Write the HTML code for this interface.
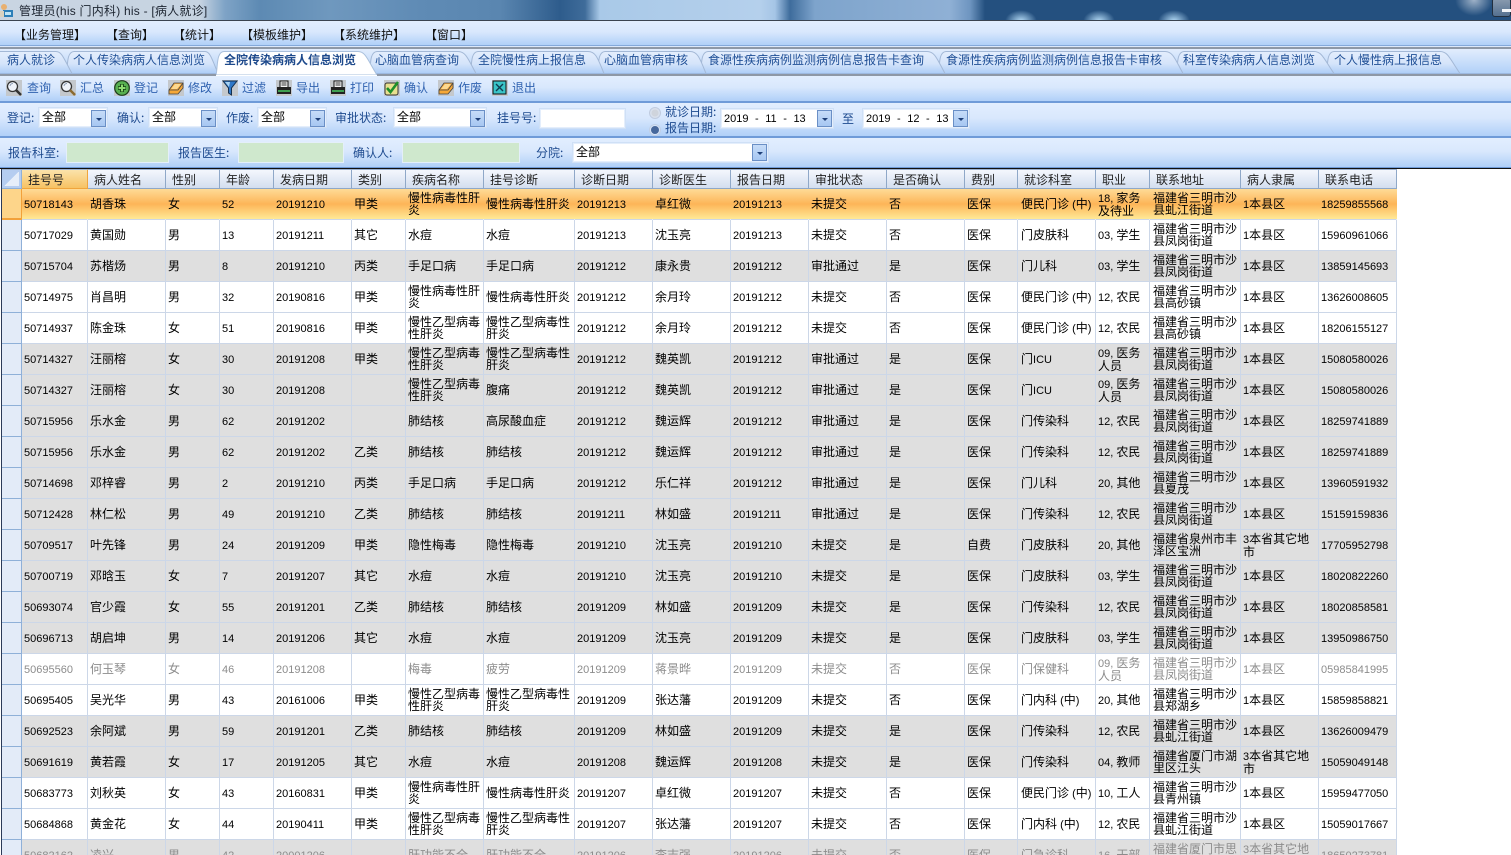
<!DOCTYPE html>
<html lang="zh"><head><meta charset="utf-8"><title>病人就诊</title>
<style>
html,body{margin:0;padding:0;background:#fff}
#p{position:relative;width:1511px;height:855px;overflow:hidden;background:#fff;font:12px/12px "WenQuanYi Zen Hei","Noto Sans CJK SC",sans-serif;color:#000}
#p i{font:normal 11px/12px "Liberation Sans",sans-serif}
#p i.dt{word-spacing:3.500px}
.a{position:absolute;white-space:nowrap}
.bar{position:absolute;left:0;width:1511px;background:linear-gradient(#e2eefe,#d9e8fd 45%,#b0d0f8)}
.l{color:#1d4a8f}
.t{color:#1f4f96}
.b{color:#2f62b0}
.box{position:absolute;background:#fff;border:1px solid #cfe0f6;box-sizing:border-box;padding:3px 0 0 3px;box-shadow:inset 0 0 0 1px #e4eefc}
.btn{position:absolute;width:15px;height:17px;box-sizing:border-box;background:linear-gradient(#c6dcf8,#a7c7f2);border:1px solid #6a8fc6}
.btn:after{content:"";position:absolute;left:4px;top:7px;border:3px solid transparent;border-top:3px solid #1e3f78;border-bottom:0}
.g{position:absolute;background:#cfe8cd;border:1px solid #e4effa;box-sizing:border-box}
.ic{position:absolute;width:16px;height:16px;top:80px;background:#c4c8cc}
table{position:absolute;left:2px;top:169px;border-collapse:separate;border-spacing:0;table-layout:fixed;width:1395px}
th{height:20px;box-sizing:border-box;padding:1px 0 0 6px;font-weight:normal;text-align:left;color:#222;background:linear-gradient(#f4f7fd,#d3deef);border-right:1px solid #8fa8c8;border-bottom:1px solid #8fa8c8;border-top:1px solid #9ab0cf;overflow:hidden}
td{height:31px;box-sizing:border-box;padding:0 0 0 2px;vertical-align:middle;border-right:1px solid #ccd7e8;border-bottom:1px solid #ccd7e8;overflow:hidden;background:#fff}
td:nth-child(16),td:nth-child(18){padding-left:3px}
tr th:first-child{padding:0;background:#b5cdf0 linear-gradient(135deg,#b5cdf0 50%,#e6eef9 50%);box-shadow:inset 0 0 0 2px #b5cdf0;border-right:1px solid #8fb0d8;border-bottom:1px solid #8fb0d8}
tr.y td{background:#dfdfdf}
tr.m td{color:#8c8c8c}
tr.s td{background:linear-gradient(#fedb97,#fdb558 50%,#ffe996);border-bottom-color:#ccd7e8;border-right-color:transparent}
table tr td:first-child{padding:0;background:#e3ebf8;border-right:1px solid #8fb0d8;border-bottom:1px solid #8fb0d8}
table tr.s td:first-child{background:#fdd58a;border-right:1px solid #f2a13a;border-bottom:1px solid #f2a13a;box-shadow:inset 0 -1px 0 #f2a13a}
th.o{background:linear-gradient(#fbe3ab,#f7c263);border-right:1px solid #f0a53c;border-bottom:1px solid #f0a53c}
</style></head><body><div id="p">

<!-- title bar -->
<div class="a" style="left:0;top:0;width:1511px;height:21px;background:linear-gradient(90deg,#c9d5e2 0,#c6d3e1 200px,#7ea3c6 225px,#5d8ab3 260px,#6f98be 330px,#5f8bb5 420px,#5a86b0 500px,#2e5c8c 560px,#3f6c9a 585px,#a9c9e8 600px,#b5d0ec 760px,#a5c5e6 775px,#3e6c9c 790px,#7ea4cc 815px,#8fb0d5 950px,#6e95c0 970px,#24507f 985px,#24507f 1511px)"></div>
<div class="a" style="left:1005px;top:10px;width:32px;height:11px;background:radial-gradient(ellipse at 50% 100%,#b4dbf6,rgba(36,80,127,0) 70%)"></div>
<div class="a" style="left:1083px;top:10px;width:32px;height:11px;background:radial-gradient(ellipse at 50% 100%,#b4dbf6,rgba(36,80,127,0) 70%)"></div>
<div class="a" style="left:1158px;top:10px;width:32px;height:11px;background:radial-gradient(ellipse at 50% 100%,#b4dbf6,rgba(36,80,127,0) 70%)"></div>
<div class="a" style="left:1455px;top:0;width:38px;height:16px;background:radial-gradient(ellipse at 50% 0,#9fb2c8,rgba(36,80,127,0) 70%)"></div>
<div class="a" style="left:1492px;top:-2px;width:19px;height:19px;box-sizing:border-box;border:1px solid #222f3e;border-radius:3px;background:linear-gradient(#8a9bb0,#54708f)"></div>
<div class="a" style="left:1502px;top:9px;width:9px;height:3px;background:#f0f4f8"></div>
<svg class="a" style="left:0;top:4px" width="14" height="14" viewBox="0 0 14 14"><rect x="3" y="6" width="10" height="7" fill="#2c7fb8"/><rect x="5" y="8" width="6" height="3" fill="#bfe4f5"/><circle cx="4" cy="3" r="3" fill="#e8b070"/><rect x="0" y="7" width="4" height="6" fill="#d9d2c0"/></svg>
<div class="a" style="left:19px;top:4px;color:#1c2430;letter-spacing:.23px;font:12px/14px 'Liberation Sans','WenQuanYi Zen Hei',sans-serif">管理员(his 门内科) his - [病人就诊]</div>
<div class="a" style="left:0;top:20px;width:1511px;height:1px;background:#3b4450"></div>

<!-- menu -->
<div class="bar" style="top:21px;height:24px"></div>
<div class="a" style="left:0;top:45px;width:1511px;height:1px;background:#84a9da"></div>
<div class="a" style="left:0;top:46px;width:1511px;height:1px;background:#dbe8fb"></div>
<div class="a" style="left:0;top:47px;width:1511px;height:2px;background:#8e98a6"></div>
<div class="a" style="left:14px;top:29px;color:#111">【业务管理】</div>
<div class="a" style="left:106px;top:29px;color:#111">【查询】</div>
<div class="a" style="left:173px;top:29px;color:#111">【统计】</div>
<div class="a" style="left:241px;top:29px;color:#111">【模板维护】</div>
<div class="a" style="left:333px;top:29px;color:#111">【系统维护】</div>
<div class="a" style="left:425px;top:29px;color:#111">【窗口】</div>

<!-- tabs -->
<div class="a" style="left:0;top:49px;width:1511px;height:25px;background:linear-gradient(#e2edfd,#b0d0f8)"></div>
<svg class="a" style="left:0;top:49px" width="1511" height="26" viewBox="0 0 1511 26">
<defs><linearGradient id="tb" x1="0" y1="0" x2="0" y2="1"><stop offset="0" stop-color="#e4eefd"/><stop offset=".55" stop-color="#d5e4fa"/><stop offset="1" stop-color="#adcdf7"/></linearGradient></defs>
<g fill="url(#tb)" stroke="#a3b8d6" stroke-width="1">
<path d="M1326.5 24.500C1328 18 1326 3 1334 2.500H1440C1448 2.500 1450 10 1460 24.500Z"/>
<path d="M1176.500 24.500C1178 18 1176 3 1184 2.500H1314C1322 2.500 1324 10 1334 24.500Z"/>
<path d="M938.500 24.500C940 18 938 3 946 2.500H1165C1173 2.500 1175 10 1183 24.500Z"/>
<path d="M700.500 24.500C702 18 700 3 708 2.500H927C935 2.500 937 10 945 24.500Z"/>
<path d="M597.500 24.500C599 18 597 3 605 2.500H690C698 2.500 700 10 706 24.500Z"/>
<path d="M470.500 24.500C472 18 470 3 478 2.500H588C596 2.500 598 10 604 24.500Z"/>
<path d="M369.500 24.500C371 18 369 3 377 2.500H458C466 2.500 468 10 476 24.500Z"/>
<path d="M66.500 24.500C68 18 66 3 74 2.500H205C210 2.500 212 10 218 24.500Z"/>
<path d="M-3 24.500V2.500H56C62 2.500 64 10 72 24.500Z"/>
</g>
<path d="M0 24.500H1511" stroke="#9db9e0" fill="none"/>
<path d="M216 26C218 18 216 3 224 2.500H358C366 2.500 368 12 377 26Z" fill="#fff" stroke="#aac0dc"/>
</svg>
<div class="a" style="left:0;top:74px;width:216px;height:2px;background:#8e98a6"></div>
<div class="a" style="left:377px;top:74px;width:1134px;height:2px;background:#8e98a6"></div>
<div class="a t" style="left:7px;top:54px">病人就诊</div>
<div class="a t" style="left:73px;top:54px">个人传染病病人信息浏览</div>
<div class="a" style="left:224px;top:54px;font-weight:bold;color:#1e4a8c">全院传染病病人信息浏览</div>
<div class="a t" style="left:375px;top:54px">心脑血管病查询</div>
<div class="a t" style="left:478px;top:54px">全院慢性病上报信息</div>
<div class="a t" style="left:604px;top:54px">心脑血管病审核</div>
<div class="a t" style="left:708px;top:54px">食源性疾病病例监测病例信息报告卡查询</div>
<div class="a t" style="left:946px;top:54px">食源性疾病病例监测病例信息报告卡审核</div>
<div class="a t" style="left:1183px;top:54px">科室传染病病人信息浏览</div>
<div class="a t" style="left:1334px;top:54px">个人慢性病上报信息</div>

<!-- toolbar -->
<div class="bar" style="top:76px;height:25px"></div>
<div class="a" style="left:0;top:101px;width:1511px;height:2px;background:#6f9bd8"></div>

<svg class="ic" style="left:6px" viewBox="0 0 16 16"><circle cx="6.500" cy="6.500" r="5" fill="#eef2f8" stroke="#333" stroke-width="1.300"/><path d="M10 10l5 5" stroke="#333" stroke-width="2.500"/><path d="M4 6a3 3 0 0 1 3-2.500" stroke="#8a9ab0" fill="none"/></svg>
<svg class="ic" style="left:60px" viewBox="0 0 16 16"><circle cx="6.500" cy="6.500" r="5" fill="#eef2f8" stroke="#333" stroke-width="1.300"/><path d="M10 10l5 5" stroke="#8a6a30" stroke-width="2.500"/><path d="M4 6a3 3 0 0 1 3-2.500" stroke="#8a9ab0" fill="none"/></svg>
<svg class="ic" style="left:114px" viewBox="0 0 16 16"><circle cx="8" cy="8" r="7.300" fill="#58b050" stroke="#1c3a1c" stroke-width="1.200"/><path d="M8 4v8M4 8h8" stroke="#0f3a10" stroke-width="3.600"/><path d="M8 4.500v7M4.500 8h7" stroke="#8edc70" stroke-width="2"/></svg>
<svg class="ic" style="left:168px" viewBox="0 0 16 16"><path d="M1 10L6 3h9v5l-5 6H1z" fill="#f6a838" stroke="#444" stroke-width=".8"/><path d="M1 10h9l5-7" fill="none" stroke="#444" stroke-width=".8"/><path d="M3 9l4-5h6l-4 5z" fill="#fdd88e"/></svg>
<svg class="ic" style="left:222px" viewBox="0 0 16 16"><path d="M1 1h14L9.500 8v7l-3-2V8z" fill="#2f78c8" stroke="#15304f"/><path d="M3 2h5L7 7z" fill="#a8d4f4"/></svg>
<svg class="ic" style="left:276px" viewBox="0 0 16 16"><rect x="4" y="1" width="8" height="7" fill="#f4f4f4" stroke="#111"/><path d="M5.500 3h5M5.500 5h5" stroke="#333"/><rect x="1" y="7" width="14" height="7" fill="#222"/><rect x="2" y="10" width="12" height="2" fill="#3f9f50"/></svg>
<svg class="ic" style="left:330px" viewBox="0 0 16 16"><rect x="4" y="1" width="8" height="7" fill="#f4f4f4" stroke="#111"/><path d="M5.500 3h5M5.500 5h5" stroke="#333"/><rect x="1" y="7" width="14" height="7" fill="#222"/><rect x="2" y="10" width="12" height="2" fill="#3f9f50"/></svg>
<svg class="ic" style="left:384px" viewBox="0 0 16 16"><rect x="1" y="3" width="13" height="12" rx="2" fill="#e8e090" stroke="#333"/><path d="M3 8l3.500 4L14 2" fill="none" stroke="#1f8f2a" stroke-width="2.600"/></svg>
<svg class="ic" style="left:438px" viewBox="0 0 16 16"><path d="M1 10L6 3h9v5l-5 6H1z" fill="#f6a838" stroke="#444" stroke-width=".8"/><path d="M1 10h9l5-7" fill="none" stroke="#444" stroke-width=".8"/><path d="M3 9l4-5h6l-4 5z" fill="#fdd88e"/></svg>
<svg class="ic" style="left:492px" viewBox="0 0 16 16"><rect x="1" y="1" width="13" height="13" fill="#3ac4c8" stroke="#111"/><path d="M4 4l7 7M11 4l-7 7" stroke="#103c50" stroke-width="1.400"/></svg>

<div class="a b" style="left:27px;top:82px">查询</div>
<div class="a b" style="left:80px;top:82px">汇总</div>
<div class="a b" style="left:134px;top:82px">登记</div>
<div class="a b" style="left:188px;top:82px">修改</div>
<div class="a b" style="left:242px;top:82px">过滤</div>
<div class="a b" style="left:296px;top:82px">导出</div>
<div class="a b" style="left:350px;top:82px">打印</div>
<div class="a b" style="left:404px;top:82px">确认</div>
<div class="a b" style="left:458px;top:82px">作废</div>
<div class="a b" style="left:512px;top:82px">退出</div>

<!-- filter row 1 -->
<div class="bar" style="top:103px;height:33px"></div>
<div class="a" style="left:0;top:136px;width:1511px;height:2px;background:#6f9bd8"></div>
<div class="a l" style="left:7px;top:112px">登记:</div>
<div class="box" style="left:38px;top:107px;width:70px;height:21px">全部</div><div class="btn" style="left:91px;top:110px"></div>
<div class="a l" style="left:117px;top:112px">确认:</div>
<div class="box" style="left:148px;top:107px;width:70px;height:21px">全部</div><div class="btn" style="left:201px;top:110px"></div>
<div class="a l" style="left:226px;top:112px">作废:</div>
<div class="box" style="left:257px;top:107px;width:70px;height:21px">全部</div><div class="btn" style="left:310px;top:110px"></div>
<div class="a l" style="left:335px;top:112px">审批状态:</div>
<div class="box" style="left:393px;top:107px;width:94px;height:21px">全部</div><div class="btn" style="left:470px;top:110px"></div>
<div class="a l" style="left:497px;top:112px">挂号号:</div>
<div class="box" style="left:539px;top:108px;width:87px;height:21px"></div>
<svg class="a" style="left:648px;top:106px" width="14" height="32" viewBox="0 0 14 32"><circle cx="7" cy="7" r="5.500" fill="#d8e0ec" stroke="#c0cce0"/><circle cx="7" cy="7" r="3.500" fill="#cfd4dc"/><circle cx="7" cy="24" r="5.500" fill="#d8e4f6" stroke="#c0cfe6"/><circle cx="7" cy="24" r="4" fill="#47689c"/></svg>
<div class="a l" style="left:665px;top:106px">就诊日期:</div>
<div class="a l" style="left:665px;top:122px">报告日期:</div>
<div class="box" style="left:720px;top:108px;width:114px;height:21px"><i class="dt">2019 - 11 - 13</i></div><div class="btn" style="left:817px;top:110px"></div>
<div class="a l" style="left:842px;top:113px">至</div>
<div class="box" style="left:862px;top:108px;width:108px;height:21px"><i class="dt">2019 - 12 - 13</i></div><div class="btn" style="left:953px;top:110px"></div>

<!-- filter row 2 -->
<div class="bar" style="top:138px;height:29px"></div>
<div class="a" style="left:0;top:167px;width:1511px;height:1px;background:#6f9bd8"></div>
<div class="a" style="left:0;top:168px;width:1511px;height:1px;background:#111"></div>
<div class="a l" style="left:8px;top:147px">报告科室:</div>
<div class="g" style="left:66px;top:142px;width:103px;height:21px"></div>
<div class="a l" style="left:178px;top:147px">报告医生:</div>
<div class="g" style="left:238px;top:142px;width:106px;height:21px"></div>
<div class="a l" style="left:353px;top:147px">确认人:</div>
<div class="g" style="left:402px;top:142px;width:118px;height:21px"></div>
<div class="a l" style="left:536px;top:147px">分院:</div>
<div class="box" style="left:572px;top:142px;width:197px;height:21px">全部</div><div class="btn" style="left:752px;top:144px"></div>

<div class="a" style="left:1px;top:169px;width:1px;height:686px;background:#2b3a58"></div>

<table>
<colgroup><col style="width:20px"><col style="width:66px"><col style="width:78px"><col style="width:54px"><col style="width:54px"><col style="width:78px"><col style="width:54px"><col style="width:78px"><col style="width:91px"><col style="width:78px"><col style="width:78px"><col style="width:78px"><col style="width:78px"><col style="width:78px"><col style="width:53px"><col style="width:78px"><col style="width:54px"><col style="width:91px"><col style="width:78px"><col style="width:78px"></colgroup>
<tr><th></th><th class="o">挂号号</th><th>病人姓名</th><th>性别</th><th>年龄</th><th>发病日期</th><th>类别</th><th>疾病名称</th><th>挂号诊断</th><th>诊断日期</th><th>诊断医生</th><th>报告日期</th><th>审批状态</th><th>是否确认</th><th>费别</th><th>就诊科室</th><th>职业</th><th>联系地址</th><th>病人隶属</th><th>联系电话</th></tr>
<tr class="s"><td></td><td><i>50718143</i></td><td>胡香珠</td><td>女</td><td><i>52</i></td><td><i>20191210</i></td><td>甲类</td><td>慢性病毒性肝炎</td><td>慢性病毒性肝炎</td><td><i>20191213</i></td><td>卓红微</td><td><i>20191213</i></td><td>未提交</td><td>否</td><td>医保</td><td>便民门诊<i> (</i>中<i>)</i></td><td><i>18, </i>家务及待业</td><td>福建省三明市沙县虬江街道</td><td><i>1</i>本县区</td><td><i>18259855568</i></td></tr>
<tr><td></td><td><i>50717029</i></td><td>黄国勋</td><td>男</td><td><i>13</i></td><td><i>20191211</i></td><td>其它</td><td>水痘</td><td>水痘</td><td><i>20191213</i></td><td>沈玉亮</td><td><i>20191213</i></td><td>未提交</td><td>否</td><td>医保</td><td>门皮肤科</td><td><i>03, </i>学生</td><td>福建省三明市沙县凤岗街道</td><td><i>1</i>本县区</td><td><i>15960961066</i></td></tr>
<tr class="y"><td></td><td><i>50715704</i></td><td>苏楷炀</td><td>男</td><td><i>8</i></td><td><i>20191210</i></td><td>丙类</td><td>手足口病</td><td>手足口病</td><td><i>20191212</i></td><td>康永贵</td><td><i>20191212</i></td><td>审批通过</td><td>是</td><td>医保</td><td>门儿科</td><td><i>03, </i>学生</td><td>福建省三明市沙县凤岗街道</td><td><i>1</i>本县区</td><td><i>13859145693</i></td></tr>
<tr><td></td><td><i>50714975</i></td><td>肖昌明</td><td>男</td><td><i>32</i></td><td><i>20190816</i></td><td>甲类</td><td>慢性病毒性肝炎</td><td>慢性病毒性肝炎</td><td><i>20191212</i></td><td>余月玲</td><td><i>20191212</i></td><td>未提交</td><td>否</td><td>医保</td><td>便民门诊<i> (</i>中<i>)</i></td><td><i>12, </i>农民</td><td>福建省三明市沙县高砂镇</td><td><i>1</i>本县区</td><td><i>13626008605</i></td></tr>
<tr><td></td><td><i>50714937</i></td><td>陈金珠</td><td>女</td><td><i>51</i></td><td><i>20190816</i></td><td>甲类</td><td>慢性乙型病毒性肝炎</td><td>慢性乙型病毒性肝炎</td><td><i>20191212</i></td><td>余月玲</td><td><i>20191212</i></td><td>未提交</td><td>否</td><td>医保</td><td>便民门诊<i> (</i>中<i>)</i></td><td><i>12, </i>农民</td><td>福建省三明市沙县高砂镇</td><td><i>1</i>本县区</td><td><i>18206155127</i></td></tr>
<tr class="y"><td></td><td><i>50714327</i></td><td>汪丽榕</td><td>女</td><td><i>30</i></td><td><i>20191208</i></td><td>甲类</td><td>慢性乙型病毒性肝炎</td><td>慢性乙型病毒性肝炎</td><td><i>20191212</i></td><td>魏英凯</td><td><i>20191212</i></td><td>审批通过</td><td>是</td><td>医保</td><td>门<i>ICU</i></td><td><i>09, </i>医务人员</td><td>福建省三明市沙县凤岗街道</td><td><i>1</i>本县区</td><td><i>15080580026</i></td></tr>
<tr class="y"><td></td><td><i>50714327</i></td><td>汪丽榕</td><td>女</td><td><i>30</i></td><td><i>20191208</i></td><td></td><td>慢性乙型病毒性肝炎</td><td>腹痛</td><td><i>20191212</i></td><td>魏英凯</td><td><i>20191212</i></td><td>审批通过</td><td>是</td><td>医保</td><td>门<i>ICU</i></td><td><i>09, </i>医务人员</td><td>福建省三明市沙县凤岗街道</td><td><i>1</i>本县区</td><td><i>15080580026</i></td></tr>
<tr class="y"><td></td><td><i>50715956</i></td><td>乐水金</td><td>男</td><td><i>62</i></td><td><i>20191202</i></td><td></td><td>肺结核</td><td>高尿酸血症</td><td><i>20191212</i></td><td>魏运辉</td><td><i>20191212</i></td><td>审批通过</td><td>是</td><td>医保</td><td>门传染科</td><td><i>12, </i>农民</td><td>福建省三明市沙县凤岗街道</td><td><i>1</i>本县区</td><td><i>18259741889</i></td></tr>
<tr class="y"><td></td><td><i>50715956</i></td><td>乐水金</td><td>男</td><td><i>62</i></td><td><i>20191202</i></td><td>乙类</td><td>肺结核</td><td>肺结核</td><td><i>20191212</i></td><td>魏运辉</td><td><i>20191212</i></td><td>审批通过</td><td>是</td><td>医保</td><td>门传染科</td><td><i>12, </i>农民</td><td>福建省三明市沙县凤岗街道</td><td><i>1</i>本县区</td><td><i>18259741889</i></td></tr>
<tr class="y"><td></td><td><i>50714698</i></td><td>邓梓睿</td><td>男</td><td><i>2</i></td><td><i>20191210</i></td><td>丙类</td><td>手足口病</td><td>手足口病</td><td><i>20191212</i></td><td>乐仁祥</td><td><i>20191212</i></td><td>审批通过</td><td>是</td><td>医保</td><td>门儿科</td><td><i>20, </i>其他</td><td>福建省三明市沙县夏茂</td><td><i>1</i>本县区</td><td><i>13960591932</i></td></tr>
<tr class="y"><td></td><td><i>50712428</i></td><td>林仁松</td><td>男</td><td><i>49</i></td><td><i>20191210</i></td><td>乙类</td><td>肺结核</td><td>肺结核</td><td><i>20191211</i></td><td>林如盛</td><td><i>20191211</i></td><td>审批通过</td><td>是</td><td>医保</td><td>门传染科</td><td><i>12, </i>农民</td><td>福建省三明市沙县凤岗街道</td><td><i>1</i>本县区</td><td><i>15159159836</i></td></tr>
<tr class="y"><td></td><td><i>50709517</i></td><td>叶先锋</td><td>男</td><td><i>24</i></td><td><i>20191209</i></td><td>甲类</td><td>隐性梅毒</td><td>隐性梅毒</td><td><i>20191210</i></td><td>沈玉亮</td><td><i>20191210</i></td><td>未提交</td><td>是</td><td>自费</td><td>门皮肤科</td><td><i>20, </i>其他</td><td>福建省泉州市丰泽区宝洲</td><td><i>3</i>本省其它地市</td><td><i>17705952798</i></td></tr>
<tr class="y"><td></td><td><i>50700719</i></td><td>邓晗玉</td><td>女</td><td><i>7</i></td><td><i>20191207</i></td><td>其它</td><td>水痘</td><td>水痘</td><td><i>20191210</i></td><td>沈玉亮</td><td><i>20191210</i></td><td>未提交</td><td>是</td><td>医保</td><td>门皮肤科</td><td><i>03, </i>学生</td><td>福建省三明市沙县凤岗街道</td><td><i>1</i>本县区</td><td><i>18020822260</i></td></tr>
<tr class="y"><td></td><td><i>50693074</i></td><td>官少霞</td><td>女</td><td><i>55</i></td><td><i>20191201</i></td><td>乙类</td><td>肺结核</td><td>肺结核</td><td><i>20191209</i></td><td>林如盛</td><td><i>20191209</i></td><td>未提交</td><td>是</td><td>医保</td><td>门传染科</td><td><i>12, </i>农民</td><td>福建省三明市沙县凤岗街道</td><td><i>1</i>本县区</td><td><i>18020858581</i></td></tr>
<tr class="y"><td></td><td><i>50696713</i></td><td>胡启坤</td><td>男</td><td><i>14</i></td><td><i>20191206</i></td><td>其它</td><td>水痘</td><td>水痘</td><td><i>20191209</i></td><td>沈玉亮</td><td><i>20191209</i></td><td>未提交</td><td>是</td><td>医保</td><td>门皮肤科</td><td><i>03, </i>学生</td><td>福建省三明市沙县凤岗街道</td><td><i>1</i>本县区</td><td><i>13950986750</i></td></tr>
<tr class="m"><td></td><td><i>50695560</i></td><td>何玉琴</td><td>女</td><td><i>46</i></td><td><i>20191208</i></td><td></td><td>梅毒</td><td>疲劳</td><td><i>20191209</i></td><td>蒋景晔</td><td><i>20191209</i></td><td>未提交</td><td>否</td><td>医保</td><td>门保健科</td><td><i>09, </i>医务人员</td><td>福建省三明市沙县凤岗街道</td><td><i>1</i>本县区</td><td><i>05985841995</i></td></tr>
<tr><td></td><td><i>50695405</i></td><td>吴光华</td><td>男</td><td><i>43</i></td><td><i>20161006</i></td><td>甲类</td><td>慢性乙型病毒性肝炎</td><td>慢性乙型病毒性肝炎</td><td><i>20191209</i></td><td>张达藩</td><td><i>20191209</i></td><td>未提交</td><td>否</td><td>医保</td><td>门内科<i> (</i>中<i>)</i></td><td><i>20, </i>其他</td><td>福建省三明市沙县郑湖乡</td><td><i>1</i>本县区</td><td><i>15859858821</i></td></tr>
<tr class="y"><td></td><td><i>50692523</i></td><td>余阿斌</td><td>男</td><td><i>59</i></td><td><i>20191201</i></td><td>乙类</td><td>肺结核</td><td>肺结核</td><td><i>20191209</i></td><td>林如盛</td><td><i>20191209</i></td><td>未提交</td><td>是</td><td>医保</td><td>门传染科</td><td><i>12, </i>农民</td><td>福建省三明市沙县虬江街道</td><td><i>1</i>本县区</td><td><i>13626009479</i></td></tr>
<tr class="y"><td></td><td><i>50691619</i></td><td>黄若霞</td><td>女</td><td><i>17</i></td><td><i>20191205</i></td><td>其它</td><td>水痘</td><td>水痘</td><td><i>20191208</i></td><td>魏运辉</td><td><i>20191208</i></td><td>未提交</td><td>是</td><td>医保</td><td>门传染科</td><td><i>04, </i>教师</td><td>福建省厦门市湖里区江头</td><td><i>3</i>本省其它地市</td><td><i>15059049148</i></td></tr>
<tr><td></td><td><i>50683773</i></td><td>刘秋英</td><td>女</td><td><i>43</i></td><td><i>20160831</i></td><td>甲类</td><td>慢性病毒性肝炎</td><td>慢性病毒性肝炎</td><td><i>20191207</i></td><td>卓红微</td><td><i>20191207</i></td><td>未提交</td><td>否</td><td>医保</td><td>便民门诊<i> (</i>中<i>)</i></td><td><i>10, </i>工人</td><td>福建省三明市沙县青州镇</td><td><i>1</i>本县区</td><td><i>15959477050</i></td></tr>
<tr><td></td><td><i>50684868</i></td><td>黄金花</td><td>女</td><td><i>44</i></td><td><i>20190411</i></td><td>甲类</td><td>慢性乙型病毒性肝炎</td><td>慢性乙型病毒性肝炎</td><td><i>20191207</i></td><td>张达藩</td><td><i>20191207</i></td><td>未提交</td><td>否</td><td>医保</td><td>门内科<i> (</i>中<i>)</i></td><td><i>12, </i>农民</td><td>福建省三明市沙县虬江街道</td><td><i>1</i>本县区</td><td><i>15059017667</i></td></tr>
<tr class="y m"><td></td><td><i>50682162</i></td><td>凌兴</td><td>男</td><td><i>42</i></td><td><i>20001206</i></td><td></td><td>肝功能不全</td><td>肝功能不全</td><td><i>20191206</i></td><td>李志强</td><td><i>20191206</i></td><td>未提交</td><td>否</td><td>医保</td><td>门急诊科</td><td><i>16, </i>干部</td><td>福建省厦门市思明区</td><td><i>3</i>本省其它地市</td><td><i>18650273781</i></td></tr>
</table>
</div></body></html>
